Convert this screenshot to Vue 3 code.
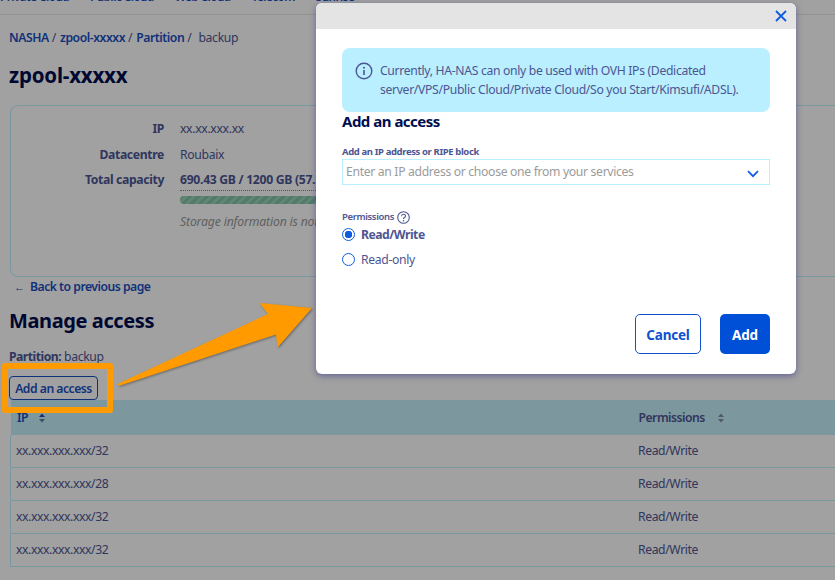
<script setup>
const navItems = ['Private Cloud', 'Public Cloud', 'Web Cloud', 'Telecom', 'Sunrise']
const rows = [
  { ip: 'xx.xxx.xxx.xxx/32', perm: 'Read/Write' },
  { ip: 'xx.xxx.xxx.xxx/28', perm: 'Read/Write' },
  { ip: 'xx.xxx.xxx.xxx/32', perm: 'Read/Write' },
  { ip: 'xx.xxx.xxx.xxx/32', perm: 'Read/Write' },
]
</script>

<template>
  <div class="root">
    <div class="page">
      <nav class="nav">
        <a v-for="item in navItems" :key="item" class="nav-item">{{ item }}</a>
      </nav>
      <main class="main">
        <div class="crumbs">
          <a>NASHA</a><span class="sep">/</span>
          <a>zpool-xxxxx</a><span class="sep">/</span>
          <a>Partition</a><span class="sep sep-last">/</span>
          <span class="cur">backup</span>
        </div>
        <h1 class="title">zpool-xxxxx</h1>
        <section class="tile">
          <div class="tile-row"><span class="k">IP</span><span class="v">xx.xx.xxx.xx</span></div>
          <div class="tile-row"><span class="k">Datacentre</span><span class="v">Roubaix</span></div>
          <div class="tile-row"><span class="k">Total capacity</span><span class="v cap">690.43 GB / 1200 GB (57.5%)</span></div>
          <div class="bar"></div>
          <p class="note">Storage information is not available</p>
        </section>
        <a class="back"><span class="back-arrow">←</span>Back to previous page</a>
        <h2 class="sub">Manage access</h2>
        <p class="part"><b>Partition:</b> backup</p>
        <button class="btn-add">Add an access</button>
        <table class="tbl">
          <thead>
            <tr>
              <th class="c1"><span class="th-a">IP</span>
                <svg class="sort" width="6" height="10" viewBox="0 0 6 10"><path d="M3 .5 6 4H0z" fill="#1e4fb8"/><path d="M3 9.500 6 6H0z" fill="#5f7f9a"/></svg>
              </th>
              <th class="c2"><span>Permissions</span>
                <svg class="sort sort-w" width="6" height="10" viewBox="0 0 6 10"><path d="M3 .5 6 4H0z" fill="#7f8ea8"/><path d="M3 9.500 6 6H0z" fill="#7f8ea8"/></svg>
              </th>
            </tr>
          </thead>
          <tbody>
            <tr v-for="(r, i) in rows" :key="i">
              <td class="c1">{{ r.ip }}</td>
              <td class="c2">{{ r.perm }}</td>
            </tr>
          </tbody>
        </table>
      </main>
    </div>

    <div class="scrim"></div>

    <div class="callout-box"></div>
    <svg class="callout-arrow" width="835" height="580" viewBox="0 0 835 580">
      <path d="M312 308 259.500 303 268 314 118.500 383.500Q117 385.500 120 385.500L276 334.500 277.500 347.500Z" fill="#ff9b00"/>
    </svg>

    <div class="modal">
      <div class="m-head">
        <svg width="12" height="12" viewBox="0 0 12 12"><path d="M1 1 11 11M11 1 1 11" stroke="#0f5ce0" stroke-width="1.800" fill="none"/></svg>
      </div>
      <div class="m-body">
        <div class="alert">
          <svg class="alert-ico" width="18" height="18" viewBox="0 0 18 18">
            <circle cx="9" cy="9" r="7.800" fill="none" stroke="#4d5693" stroke-width="1.400"/>
            <rect x="8.200" y="8" width="1.600" height="5" fill="#4d5693"/>
            <circle cx="9" cy="5.800" r="1" fill="#4d5693"/>
          </svg>
          <p>Currently, HA-NAS can only be used with OVH IPs (Dedicated server/VPS/Public Cloud/Private Cloud/So you Start/Kimsufi/ADSL).</p>
        </div>
        <h3 class="m-title">Add an access</h3>
        <label class="m-label">Add an IP address or RIPE block</label>
        <div class="select">
          <span>Enter an IP address or choose one from your services</span>
          <svg width="12" height="8" viewBox="0 0 12 8"><path d="M1 1.200 6 6.200 11 1.200" stroke="#0f5ce0" stroke-width="1.700" fill="none"/></svg>
        </div>
        <div class="perm-label"><span>Permissions</span>
          <svg width="13" height="13" viewBox="0 0 13 13">
            <circle cx="6.500" cy="6.500" r="5.800" fill="none" stroke="#4d5693" stroke-width="1.100"/>
            <path d="M4.500 5.200Q4.600 3.200 6.500 3.200 8.500 3.200 8.500 5 8.500 6 7.400 6.500 6.500 6.900 6.500 8" fill="none" stroke="#4d5693" stroke-width="1.100"/>
            <circle cx="6.500" cy="9.800" r=".8" fill="#4d5693"/>
          </svg>
        </div>
        <div class="radio on"><span class="dot"></span>Read/Write</div>
        <div class="radio"><span class="dot"></span>Read-only</div>
        <div class="m-foot">
          <button class="b-cancel">Cancel</button>
          <button class="b-ok">Add</button>
        </div>
      </div>
    </div>
  </div>
</template>

<style>
html, body { margin: 0; background: #fff; }
</style>

<style scoped>
.root { position: relative; width: 835px; height: 580px; overflow: hidden; font-family: "Noto Sans", sans-serif; color: #4d5693; font-size: 12.200px; letter-spacing: -0.33px; }
.page { width: 900px; }
.nav { height: 14px; border-bottom: 1px solid #e9e9e9; overflow: hidden; display: flex; gap: 21px; }
.nav-item { color: #1a4fc0; font-size: 11.600px; font-weight: 600; letter-spacing: -0.5px; line-height: 16px; margin-top: -11px; white-space: nowrap; }
.main { padding-left: 10px; }
.crumbs { height: 20px; margin-top: 13px; margin-left: -1px; line-height: 20px; display: flex; color: #4d5693; }
.crumbs a { color: #1a4fc0; font-weight: 600; letter-spacing: -0.45px; }
.sep { margin: 0 4px 0 3px; }
.sep-last { margin-right: 7px; }
.title { margin: 12px 0 0 -1px; height: 30px; line-height: 30px; font-size: 20.500px; letter-spacing: -0.2px; font-weight: 700; color: #000e50; }
.tile { margin-top: 15px; height: 172px; box-sizing: border-box; border: 1px solid #bef1ff; border-radius: 8px 0 0 8px; border-right: 0; padding-top: 10px; }
.tile-row { display: flex; height: 25.500px; line-height: 25px; }
.k { width: 153px; text-align: right; font-weight: 700; letter-spacing: -0.35px; margin-right: 16px; color: #4d5693; }
.v { color: #4d5693; }
.cap { font-weight: 700; letter-spacing: -0.3px; border-bottom: 1px dotted #8a8a8a; height: 20px; line-height: 20px; margin-top: 3px; }
.bar { margin: 3px 0 0 169px; height: 8px; width: 300px; border-radius: 4px; background: repeating-linear-gradient(135deg, #7fc4a6 0 3px, #9fd3bb 3px 6px); }
.note { margin: 8px 0 0 169px; font-style: italic; color: #999; line-height: 20px; letter-spacing: -0.15px; }
.back { display: block; height: 20px; line-height: 20px; color: #1a4fc0; font-weight: 600; letter-spacing: -0.5px; }
.back-arrow { display: inline-block; width: 20px; padding-left: 4px; box-sizing: border-box; font-weight: 400; font-size: 11px; }
.sub { margin: 9px 0 0 -1px; height: 30px; line-height: 30px; font-size: 20px; letter-spacing: -0.4px; font-weight: 700; color: #000e50; }
.part { margin: 11px 0 0 -1px; height: 20px; line-height: 20px; }
.part b { font-weight: 700; letter-spacing: -0.5px; }
.btn-add { display: block; margin: 9px 0 0 -1px; width: 89px; height: 24px; padding: 0; background: #fff; border: 1px solid #1a4fc0; border-radius: 4px; color: #1a4fc0; font: 600 12.200px "Noto Sans", sans-serif; letter-spacing: -0.5px; }
.tbl { border-collapse: collapse; width: 880px; table-layout: fixed; }
.tbl th { background: #c6f0fb; height: 35px; text-align: left; font-weight: 600; letter-spacing: -0.5px; padding: 0 0 0 5.500px; color: #4d5693; }
.th-a { color: #1a4fc0; }
.sort { margin-left: 11px; vertical-align: -1px; }
.sort-w { margin-left: 13px; }
.tbl td { height: 32px; padding: 0 0 0 5px; border-bottom: 1px solid #bef1ff; line-height: 20px; letter-spacing: -0.4px; }
.tbl .c1 { width: 616px; }
.tbl td.c1 { border-left: 1px solid #bef1ff; }
.tbl th.c1 { padding-left: 6.500px; }
.scrim { position: absolute; inset: 0; background: rgba(0, 0, 0, .37); }
.callout-box { position: absolute; left: 2px; top: 363px; width: 111px; height: 50px; box-sizing: border-box; border: 6px solid #ff9b00; border-radius: 3px; }
.callout-arrow { position: absolute; left: 0; top: 0; filter: drop-shadow(1px 1px 1px rgba(0, 0, 0, .35)); }
.modal { position: absolute; left: 316px; top: 3px; width: 480px; height: 371px; background: #fff; border-radius: 6px; box-shadow: 0 2px 6px rgba(60, 60, 140, .6); overflow: hidden; }
.m-head { height: 26px; background: #e4e4e4; display: flex; align-items: center; justify-content: flex-end; padding-right: 9px; }
.m-body { padding: 19px 26px 0; display: flex; flex-direction: column; }
.alert { display: flex; height: 64px; box-sizing: border-box; background: #b9efff; border-radius: 8px; padding: 13px 15px 0 13px; gap: 7px; }
.alert-ico { flex: none; margin-top: 1px; }
.alert p { margin: 0; line-height: 19px; }
.m-title { margin: -1px 0 0; height: 20px; line-height: 20px; font-size: 15px; letter-spacing: -0.5px; font-weight: 700; color: #000e50; }
.m-label { margin-top: 14px; font-size: 9.500px; line-height: 14px; font-weight: 700; letter-spacing: -0.38px; }
.select { margin-top: 0; height: 26px; box-sizing: border-box; border: 1px solid #b9efff; display: flex; align-items: center; justify-content: space-between; padding: 0 10px 2px 3px; color: #9b9b9b; }
.select svg { margin-top: 5px; }
.perm-label { margin-top: 25px; height: 14px; font-size: 9.500px; line-height: 14px; font-weight: 600; letter-spacing: -0.36px; display: flex; align-items: center; gap: 3px; }
.radio { display: flex; align-items: center; height: 25px; gap: 6px; }
.radio .dot { width: 13px; height: 13px; box-sizing: border-box; border: 1.200px solid #0f5ce0; border-radius: 50%; background: #fff; }
.radio.on { font-weight: 700; letter-spacing: -0.5px; margin-top: -2px; }
.radio.on .dot { background: radial-gradient(circle, #0f5ce0 0 3.500px, #fff 4px); }
.m-foot { display: flex; justify-content: flex-end; gap: 19px; margin-top: 42px; }
.m-foot button { height: 40px; border-radius: 5px; font: 700 13.500px "Noto Sans", sans-serif; letter-spacing: -0.2px; padding: 2px 0 0; }
.b-cancel { width: 66px; background: #fff; color: #0f50d0; border: 1px solid #0f50d0; }
.b-ok { width: 50px; background: #0050d7; color: #fff; border: 0; }
</style>
